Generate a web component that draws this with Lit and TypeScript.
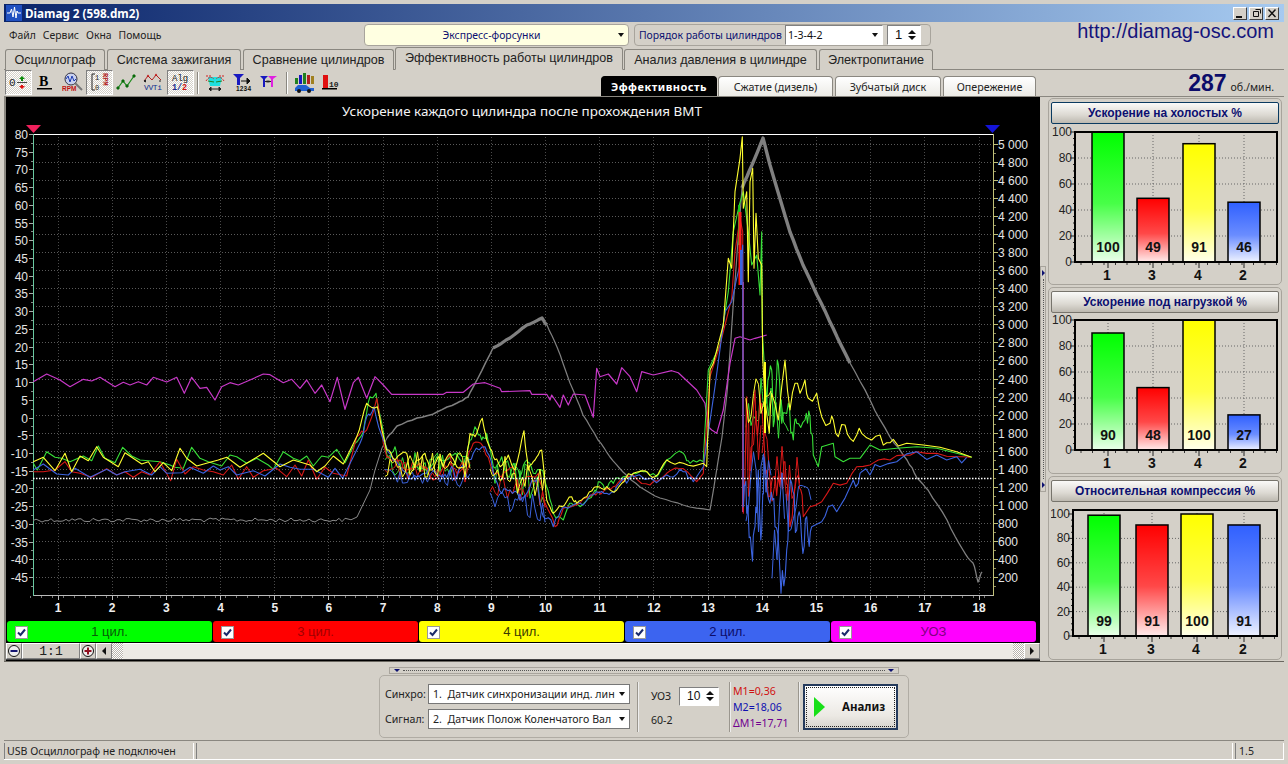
import { LitElement, html, css, svg } from "lit";
import { customElement, property } from "lit/decorators.js";

type Pt = [number, number];
const zoom = (ox: number, oy: number) => (s: string): Pt[] =>
  s.trim().split(/\s+/).map((p) => {
    const [a, b] = p.split(",").map(Number);
    return [ox + a / 3, oy + b / 3] as Pt;
  });
const Z7 = zoom(690, 125);
const Z8 = zoom(690, 360);
const Z9 = zoom(0, 370);
const Z10 = zoom(350, 300);

let seed = 12345;
const rnd = () => {
  seed = (seed * 1103515245 + 12345) & 0x7fffffff;
  return seed / 0x7fffffff;
};
const jitter = (pts: Pt[], amp: number): Pt[] => {
  const out: Pt[] = [];
  for (let i = 0; i < pts.length; i++) {
    out.push(pts[i]);
    if (i < pts.length - 1) {
      const [x0, y0] = pts[i];
      const [x1, y1] = pts[i + 1];
      out.push([(x0 + x1) / 2, (y0 + y1) / 2 + (rnd() - 0.5) * 2 * amp]);
    }
  }
  return out;
};
const jj = (pts: Pt[], amp: number) => jitter(jitter(pts, amp), amp * 0.7);
const P = (pts: Pt[]) => pts.map(([x, y]) => `${x.toFixed(1)},${y.toFixed(1)}`).join(" ");

/** A jagged trace between x0 and x1 whose samples stay inside a linearly changing y band. */
const band = (x0: number, x1: number, t0: number, b0: number, t1: number, b1: number, step = 2.5): Pt[] => {
  const out: Pt[] = [];
  for (let x = x0; x <= x1; x += step) {
    const f = (x - x0) / (x1 - x0);
    const t = t0 + (t1 - t0) * f;
    const b = b0 + (b1 - b0) * f;
    out.push([x, t + (b - t) * rnd()]);
  }
  return out;
};

const grayThin0: Pt[] = (() => {
  const out: Pt[] = [];
  for (let x = 33; x < 352; x += 3) out.push([x, 520 + (rnd() - 0.5) * 4]);
  return out;
})();
const grayA: Pt[] = [...grayThin0, [357, 517], [370, 490], [375, 470], [382, 448], [387, 438]];
const grayB: Pt[] = jj([[387, 438], [397, 426], [417, 418], [437, 412], [457, 403], [468, 397], [478, 378], [493, 348]], 1);
const grayC: Pt[] = jj([[493, 348], [510, 338], [527, 325], [542, 318], [547, 325]], 1);
const grayD: Pt[] = jj([[547, 325], [557, 347], [570, 383], [583, 415], [598, 440], [610, 457], [623, 472], [640, 487], [660, 498], [683, 505], [710, 510], [722, 437], [727, 393], [730, 352], [733, 308], [742, 188]], 0.9);
const grayE: Pt[] = jj([[742, 188], [752, 165], [763, 138], [770, 165], [790, 232], [803, 265], [817, 295], [833, 328], [850, 363]], 0.8);
const grayF: Pt[] = jj([[850, 363], [870, 400], [890, 437], [907, 460], [917, 478], [928, 490], [947, 520], [963, 550], [973, 563], [978, 582], [982, 572]], 1.5);

const magenta: Pt[] = [
  ...Z9("100,35 140,12 180,30 210,50 250,28 275,33 300,22 345,50 370,37 390,45 415,35 440,45 460,22 500,36 530,22 553,70 575,22 600,55 620,52 645,90 665,50 690,38 715,45 750,30 790,12 810,14 850,38 875,28 900,55 920,30 945,70 965,45 990,95 1012,22 1035,118 1060,38"),
  ...Z10("25,232 50,295 75,230 100,255 125,283 280,283 290,277 340,277 370,252 405,248 450,265 455,275 540,272 545,283 590,283 600,300 605,285 630,322 640,285 655,315 670,282 705,285 730,352 740,205 750,230 775,222 800,252 815,203 840,230 860,275 875,215 910,225 965,212 985,218 1040,270 1065,310 1075,380"),
  ...Z8("65,210 80,220 100,150 120,10"),
  ...Z7("135,640 150,635 180,645 195,640 230,630"),
];

const green: Pt[] = [
  ...Z9("100,280 112,300 140,245 165,262 185,265 210,275 250,258 275,272 295,228 315,265 345,278 368,232 395,258 420,270 445,272 480,275 510,285 525,292 550,295 575,232 600,265 625,275 665,288 690,255 710,260 740,280 770,265 805,285 820,298 850,245 880,265 900,272 920,258 940,288 965,258 985,262 1010,238 1035,278"),
  ...jj(Z10("15,430 40,395 60,290 78,280 95,370 115,475 135,440 150,500 175,520 200,500 225,510 260,470 290,480 315,460 340,500 360,420 375,380 395,420 410,400 430,500 455,470 475,530 490,490 510,530 530,480 550,520 575,510 590,560 610,640 640,660 665,610 690,620 735,570 745,545 765,570 790,550 820,530 850,520 880,515 920,530 950,480 1000,460 1020,490 1060,485"), 4),
  ...Z8("40,300 55,30"),
  ...Z7("90,660 115,500 130,320 148,240 160,200 175,320 185,420 200,390 210,510 215,320 217,620"),
  ...jj(Z8("230,130 245,30 250,200 262,0 275,190 295,130 310,240 320,190 345,180 360,170 370,285"), 14),
  ...Z8("385,320 395,260 430,250 435,290 460,305 480,295 510,295 540,255 570,270 620,265 680,260 740,265 800,280 845,292"),
];
const yellow: Pt[] = [
  ...Z9("100,275 130,262 165,302 195,250 215,305 240,258 265,272 290,230 310,262 355,290 375,248 425,282 445,275 465,305 490,278 515,302 540,235 560,265 590,288 625,278 655,270 680,262 720,292 790,250 840,290 880,270 930,285 950,305 975,288 1000,258 1030,282"),
  ...jj(Z10("20,410 50,310 82,320 110,450 135,480 170,460 180,525 200,480 225,460 240,510 265,470 280,500 300,460 320,500 345,500 360,400 375,410 397,355 410,420 430,470 450,500 475,465 495,510 522,392 535,510 555,480 575,450 590,600 610,640 635,620 665,590 680,610 710,590 740,560 770,560 800,570 830,530 850,520 885,512 915,530 950,480 1000,490 1060,490"), 3),
  ...Z8("50,320 60,30"),
  ...Z7("70,715 100,600 115,400 125,430 135,200 150,100 157,35 160,250 170,200 175,470 180,170 188,130 192,430 198,265 205,400 215,420 218,700"),
  ...jitter(Z8("225,120 238,220 245,100 265,180 285,0 300,150 315,70 330,100 345,60 355,115 380,100 395,170 420,190 430,180 445,230 465,195 480,235 500,225 515,220 545,240 570,225 590,248 610,238"), 8),
  ...Z8("625,258 650,250 700,255 750,262 800,275 845,292"),
];
const red: Pt[] = [
  ...Z9("100,305 130,305 165,300 195,275 215,305 240,310 275,322 320,296 350,315 375,305 400,322 425,305 450,315 480,275 512,332 530,268 555,312 580,290 610,300 640,305 670,315 695,285 715,328 740,290 760,322 790,302 830,295 860,320 885,285 905,318 925,270 950,328 975,292 1000,310 1040,318"),
  ...jj(Z10("20,410 50,390 80,295 100,430 115,470 150,480 170,510 210,490 250,540 300,465 320,520 345,490 370,430 400,440 430,520 455,530 490,500 510,570 530,530 565,520 585,610 615,680 640,625 690,610 730,580 760,575 790,560 820,545 850,525 900,555 950,520 985,505 1040,545"), 4),
  ...Z8("40,340 60,50"),
  ...Z7("90,660 125,520 135,380 150,280 158,320"),
  ...jj(Z8("160,460 170,110 178,330 195,90 205,200 215,130 230,330 250,350 270,380 285,305 300,500 325,345 340,470"), 26),
  ...jitter(Z8("360,440 395,425 430,370 470,370 500,320 540,315 565,300 600,300 640,285 680,275 740,280 800,290 840,292"), 2),
];
const blue: Pt[] = [
  ...Z9("100,300 130,282 170,312 205,315 225,295 270,322 320,298 350,315 375,305 420,298 455,315 480,290 500,310 545,308 570,292 610,310 640,288 660,300 685,290 710,315 760,302 795,318 840,282 870,292 900,298 940,298 985,322 1005,295 1028,325"),
  ...jj(Z10("30,430 50,350 72,320 100,420 130,480 170,520 200,530 240,500 280,530 300,510 320,535 345,500 370,460 405,440 430,520 455,580 480,570 510,600 540,560 560,540 580,650 610,680 640,620 700,615 740,575 770,580 800,560 830,550 850,530 920,548 960,530 1000,515 1030,545"), 5),
  ...Z8("40,320 75,80"),
  ...Z7("105,560 125,530 140,460 150,420 158,360"),
  ...jj(Z8("160,440 170,460 185,580 195,500 205,330 215,510 222,290 240,430 255,500 273,700 290,570 305,370 320,510 335,540 350,470 365,500"), 30),
  ...jitter(Z8("395,485 415,440 440,455 490,360 505,370 515,335 540,345 570,320 620,305 680,275 740,285 800,290 830,292"), 7),
];

const bands = {
  green: [band(385, 470, 452, 476, 452, 478), band(490, 545, 452, 492, 470, 506), band(746, 790, 362, 430, 400, 445)],
  yellow: [band(385, 470, 450, 478, 452, 478), band(490, 545, 448, 488, 470, 505), band(746, 772, 358, 430, 375, 415)],
  red: [band(385, 470, 456, 478, 462, 484), band(490, 545, 468, 496, 480, 512), band(746, 762, 395, 505, 420, 500), band(762, 800, 425, 500, 455, 515)],
  blue: [band(385, 470, 466, 482, 470, 490), band(490, 545, 482, 506, 495, 525), band(746, 772, 440, 540, 450, 530), band(772, 786, 470, 590, 470, 560), band(786, 812, 480, 535, 485, 520)],
};

const X0 = 58, XS = 54.18;
const xs = Array.from({ length: 18 }, (_, i) => X0 + XS * i);
const rightTicks = Array.from({ length: 25 }, (_, i) => ({ y: 144 + 18.08 * i, v: 5000 - 200 * i }));
const leftTicks = Array.from({ length: 26 }, (_, i) => ({ y: 134.5 + 17.72 * i, v: 80 - 5 * i })).filter((t) => t.v >= -45);
const fmt = (v: number) => (v >= 1000 ? `${Math.floor(v / 1000)} ${String(v % 1000).padStart(3, "0")}` : `${v}`);

@customElement("bar-panel")
class BarPanel extends LitElement {
  static styles = css`
    :host { display: block; }
    .panel { border: 1px solid #a8a49c; border-radius: 5px; padding: 3px 2px 0; box-sizing: border-box; display: flex; flex-direction: column; height: 100%; }
    .head { height: 22px; box-sizing: border-box; border: 1px solid #77746c; border-radius: 2px; background: linear-gradient(#fafaf8, #dcd9d2 60%, #bdb9b0); display: flex; align-items: center; justify-content: center; font: bold 12px "Liberation Sans", sans-serif; color: #0c1070; flex: none; }
    .head.focus { border-color: #0a3a60; }
    svg { display: block; flex: none; }
    .lab { font: 12px "Liberation Sans", sans-serif; fill: #222; }
    .cat { font: bold 14px "Liberation Sans", sans-serif; fill: #111; }
    .val { font: bold 14px "Liberation Sans", sans-serif; fill: #111; }
  `;
  @property() heading = "";
  @property({ type: Boolean }) focus = false;
  @property({ type: Array }) bars: { x: number; v: number; c: string }[] = [];
  @property({ type: Number }) top = 8;
  @property({ type: Number }) ph = 130;
  @property({ type: Number }) left = 24;
  @property({ type: Number }) scale = 1.3;
  @property({ type: Number }) h = 160;

  render() {
    const bottom = this.top + this.ph;
    const right = 226;
    const L = this.left;
    const s = this.scale;
    const ticks = [0, 20, 40, 60, 80, 100];
    const minors: number[] = [];
    for (let v = 0; v <= 100; v += 5) minors.push(v);
    const bottomMinor: number[] = [];
    for (let x = L + 6; x < right; x += 11.5) bottomMinor.push(x);
    return html`<div class="panel">
      <div class="head ${this.focus ? "focus" : ""}">${this.heading}</div>
      <svg width="230" height=${this.h} viewBox="0 0 230 ${this.h}">
        <defs>
          ${this.bars.map(
            (b, i) => svg`<linearGradient id="g${i}" x1="0" y1="0" x2="0" y2="1"><stop offset="0" stop-color=${b.c}/><stop offset="0.55" stop-color=${b.c} stop-opacity="0.72"/><stop offset="1" stop-color=${b.c} stop-opacity="0.08"/></linearGradient>`
          )}
        </defs>
        ${ticks.filter((v) => v > 0 && v < 100).map(
          (v) => svg`<line x1=${L} x2=${right} y1=${bottom - v * s} y2=${bottom - v * s} stroke="#666" stroke-dasharray="1 2"/>`
        )}
        ${this.bars.map(
          (b) => svg`<line x1=${b.x + 16} x2=${b.x + 16} y1=${this.top} y2=${bottom} stroke="#666" stroke-dasharray="1 2"/>`
        )}
        ${minors.map((v) => svg`<line x1=${L - (v % 20 === 0 ? 5 : 2)} x2=${L} y1=${bottom - v * s} y2=${bottom - v * s} stroke="#222"/>`)}
        ${bottomMinor.map((x) => svg`<line x1=${x} x2=${x} y1=${bottom} y2=${bottom + 3} stroke="#333"/>`)}
        ${this.bars.map(
          (b, i) => svg`
            <rect x=${b.x} y=${bottom - Math.min(b.v * s, this.ph)} width="32" height=${Math.min(b.v * s, this.ph)} fill="#fff"/>
            <rect x=${b.x} y=${bottom - Math.min(b.v * s, this.ph)} width="32" height=${Math.min(b.v * s, this.ph)} fill="url(#g${i})" stroke="#000" stroke-width="1.5"/>
            <text class="val" x=${b.x + 16} y=${bottom - 10} text-anchor="middle">${b.v}</text>
            <line x1=${b.x + 16} x2=${b.x + 16} y1=${bottom} y2=${bottom + 6} stroke="#222"/>
          `
        )}
        <path d="M${L} ${this.top}H${right}V${bottom}H${L}Z" fill="none" stroke="#000" stroke-width="2"/>
        ${ticks.map(
          (v) => svg`<text class="lab" x=${L - 3} y=${bottom - v * s + 4} text-anchor="end">${v}</text>`
        )}
        ${this.bars.map(
          (b, i) => svg`<text class="cat" x=${b.x + 15} y=${bottom + 18} text-anchor="middle">${["1", "3", "4", "2"][i]}</text>`
        )}
      </svg>
    </div>`;
  }
}

const G = "#00ff00", R = "#ff0000", Y = "#ffff00", B = "#3060ff";

const icons = [
  svg`<text x="1" y="14" font-size="11" font-family="Liberation Mono" fill="#222">0</text><path d="M14 4l3 3h-2v2h-2V7h-2z" fill="#0a8a0a"/><path d="M14 17l-3-3h2v-1h2v1h2z" fill="#e01010"/><line x1="9" x2="19" y1="10.5" y2="10.5" stroke="#444"/>`,
  svg`<text x="4" y="14" font-size="14" font-weight="bold" font-family="Liberation Serif" fill="#000">B</text><rect x="2" y="16" width="15" height="1.5" fill="#000"/>`,
  svg`<circle cx="9" cy="7" r="6" fill="#c8d0f0" stroke="#334"/><path d="M4 7l2-3 2 6 2-6 2 5 2-2" fill="none" stroke="#1a3ab0"/><text x="0" y="19" font-size="6.5" font-weight="bold" font-family="Liberation Sans" fill="#c01010">RPM</text><line x1="13" y1="11" x2="20" y2="18" stroke="#777" stroke-width="2"/>`,
  svg`<path d="M6 2H3V18H6" fill="none" stroke="#222"/><text x="6" y="8" font-size="7" font-family="Liberation Mono" fill="#222">1</text><text x="6" y="18" font-size="7" font-family="Liberation Mono" fill="#222">0</text><text transform="translate(14,1) rotate(90)" font-size="7" font-weight="bold" font-family="Liberation Mono" fill="#b02020">RPM</text>`,
  svg`<polyline points="2,16 7,9 11,14 18,4" fill="none" stroke="#1a8a1a" stroke-width="1.2"/><path d="M2 14l2 2-2 2-2-2zM7 7l2 2-2 2-2-2zM11 12l2 2-2 2-2-2zM18 2l2 2-2 2-2-2z" fill="#0a6a0a"/>`,
  svg`<polyline points="1,9 5,4 9,8 13,3 18,8" fill="none" stroke="#b02020"/><path d="M5 2.5l1.5 2h-3zM13 1.5l1.5 2h-3z" fill="#c01010"/><path d="M1 9l1.5-1v2zM18 9l-2 0" stroke="#222"/><text x="1" y="18" font-size="8" font-family="Liberation Mono" textLength="18" fill="#123090">VVTi</text>`,
  svg`<text x="2" y="9" font-size="9" font-family="Liberation Mono" fill="#222">Alg</text><text x="2" y="18" font-size="8.5" font-weight="bold" font-family="Liberation Mono" fill="#1a2a90">1/</text><text x="12" y="18" font-size="8.5" font-weight="bold" font-family="Liberation Mono" fill="#d01010">2</text>`,
  svg`<path d="M3 5H17L15 14H5Z" fill="#20e0e0"/><path d="M1 9Q5 3 9 7M19 9Q15 3 11 7M1 4H6M14 4H19" fill="none" stroke="#d02020" stroke-dasharray="2 1"/><path d="M3 9l6 1M17 9l-6 1" stroke="#208020"/><path d="M4 17H16M4 17l2-2v4zM16 17l-2-2v4z" stroke="#222" fill="#222"/>`,
  svg`<path d="M1 2H12L8 6V13H5V6Z" fill="#1818c0"/><path d="M9 9H18M18 9l-3-3v6z" fill="#111" stroke="#111"/><text x="4" y="19" font-size="6.5" font-weight="bold" font-family="Liberation Sans" textLength="15" fill="#111">1234</text>`,
  svg`<path d="M1 4H9L6 7V15H4V7Z" fill="#1818c0"/><path d="M9 4H18L14 7V15H12V7Z" fill="#e020e0"/><path d="M6 9.5H12" stroke="#222"/><path d="M6.5 9.5l2-1.5v3zM11.5 9.5l-2-1.5v3z" fill="#222"/>`,
  svg`<g><rect x="1" y="6" width="3" height="6" fill="#208020"/><rect x="5" y="3" width="3" height="9" fill="#1818c0"/><rect x="9" y="1" width="3" height="11" fill="#208020"/><rect x="13" y="3" width="3" height="9" fill="#b02020"/><rect x="17" y="4" width="3" height="8" fill="#a08020"/></g><path d="M1 16l3-3h8l4 3h4v3H1z" fill="#2060d0"/><circle cx="5" cy="19" r="2" fill="#111"/><circle cx="15" cy="19" r="2" fill="#111"/>`,
  svg`<rect x="2" y="3" width="5" height="13" fill="#e01010"/><rect x="1" y="16" width="15" height="1.5" fill="#000"/><text x="8" y="15" font-size="8" font-weight="bold" font-family="Liberation Mono" fill="#222">10</text>`,
];

const toggled = new Set([0, 3, 6]);
const tabs = ["Осциллограф", "Система зажигания", "Сравнение цилиндров", "Эффективность работы цилиндров", "Анализ давления в цилиндре", "Электропитание"];
const subs = ["Эффективность", "Сжатие (дизель)", "Зубчатый диск", "Опережение"];
const legend = [
  { t: "1 цил.", c: "lg" },
  { t: "3 цил.", c: "lr" },
  { t: "4 цил.", c: "ly" },
  { t: "2 цил.", c: "lb" },
  { t: "УОЗ", c: "lm" },
];

@customElement("app-root")
export class AppRoot extends LitElement {
  static styles = css`
    :host { display: block; width: 1288px; height: 764px; overflow: hidden; background: #d4d0c8; font-family: "Liberation Sans", sans-serif; color: #111; }
    .win { display: flex; flex-direction: column; height: 764px; box-sizing: border-box; padding: 4px 4px 4px; }
    .title { height: 18px; flex: none; background: linear-gradient(90deg, #0a246a, #a6caf0); display: flex; align-items: center; padding: 0 5px 0 2px; color: #fff; font: bold 11.7px "Noto Sans", sans-serif; }
    .logo { margin-right: 3px; display: block; }
    .wb { display: flex; margin-left: auto; gap: 2px; }
    .wbtn { width: 14px; height: 13px; box-sizing: border-box; background: #d4d0c8; border: 1px solid; border-color: #fff #404040 #404040 #fff; display: block; }
    .wbtn svg { display: block; }

    .top { height: 25px; flex: none; display: flex; align-items: center; position: relative; }
    .menu { width: 360px; display: flex; gap: 7px; padding-left: 5px; box-sizing: border-box; font: 10.4px "Noto Sans", sans-serif; color: #222; flex: none; }
    .combo-y { width: 265px; height: 22px; box-sizing: border-box; border: 1px solid #a8a49c; border-radius: 4px; background: #ffffe1; display: flex; align-items: center; font: 10.4px "Noto Sans", sans-serif; color: #0c1070; flex: none; }
    .combo-y span { flex: 1; text-align: center; }
    .arrow { width: 0; height: 0; border: 3.5px solid transparent; border-top: 4px solid #111; border-bottom: 0; margin-right: 4px; flex: none; }
    .order { margin-left: 5px; width: 297px; height: 22px; box-sizing: border-box; border: 1px solid #a8a49c; border-radius: 4px; display: flex; align-items: center; padding-left: 4px; font: 10.4px "Noto Sans", sans-serif; color: #0c1070; flex: none; gap: 4px; }
    .order .lbl { width: 142px; white-space: nowrap; flex: none; }
    .field { background: #fff; border: 1px solid; border-color: #808080 #fff #fff #808080; box-sizing: border-box; display: flex; align-items: center; color: #111; font: 10.6px "Noto Sans", sans-serif; padding-left: 2px; }
    .cyl { width: 98px; height: 20px; justify-content: space-between; }
    .spin1 { width: 34px; height: 20px; justify-content: space-between; font: 13px "Liberation Sans", sans-serif; padding-left: 7px; }
    .spn { display: flex; flex-direction: column; gap: 2px; margin-right: 4px; }
    .spn i { display: block; width: 0; height: 0; border: 4px solid transparent; }
    .spn i:first-child { border-bottom: 4px solid #111; border-top: 0; }
    .spn i:last-child { border-top: 4px solid #111; border-bottom: 0; }
    .url { margin-left: auto; margin-right: 10px; font: 20px "Liberation Sans", sans-serif; color: #14147c; align-self: flex-start; line-height: 21px; margin-top: -1px; }

    .tabs { height: 23px; flex: none; display: flex; align-items: flex-end; box-sizing: border-box; border-bottom: 1px solid #8a8780; padding-left: 1px; gap: 2px; }
    .tab { height: 21px; box-sizing: border-box; border: 1px solid #8a8780; border-bottom: 0; border-radius: 3px 3px 0 0; background: #d4d0c8; font: 12.6px "Liberation Sans", sans-serif; color: #222; display: flex; align-items: center; justify-content: center; white-space: nowrap; margin-bottom: -1px; flex: none; }
    .tab.t0 { width: 100px; } .tab.t1 { width: 134px; } .tab.t2 { width: 151px; } .tab.t4 { width: 193px; } .tab.t5 { width: 114px; }
    .tab.t3 { width: 228px; height: 23px; margin: 0 -1px -1px -1px; padding-bottom: 2px; border-bottom: 1px solid #d4d0c8; }

    .tool { height: 27px; flex: none; display: flex; align-items: flex-end; box-sizing: border-box; border-bottom: 1px solid #8a8780; padding-left: 1px; position: relative; }
    .icons { display: flex; width: 345px; flex: none; height: 25px; align-items: center; margin-bottom: 1px; }
    .tb { width: 27px; height: 25px; box-sizing: border-box; display: flex; align-items: center; justify-content: center; flex: none; }
    .tb.on { background: repeating-conic-gradient(#fff 0 25%, #d4d0c8 0 50%) 0 0 / 2px 2px; border: 1px solid; border-color: #808080 #fff #fff #808080; }
    .sep { width: 8px; height: 22px; flex: none; display: flex; justify-content: center; }
    .sep::before { content: ""; width: 1px; background: #8a8780; border-right: 1px solid #fff; }
    .subs { display: flex; margin-left: 251px; gap: 1px; align-items: flex-end; flex: none; }
    .sub { height: 20px; box-sizing: border-box; border: 1px solid #8a8780; border-bottom: 0; border-radius: 4px 4px 0 0; background: linear-gradient(#fff, #ecebe6); font: 10.7px "Noto Sans", sans-serif; color: #222; display: flex; align-items: center; justify-content: center; }
    .sub.s0 { width: 116px; background: #000; color: #fff; font: bold 11px "Noto Sans", sans-serif; letter-spacing: 0.5px; border-color: #000; }
    .sub.s1 { width: 115px; }
    .sub.s2 { width: 106px; margin-left: 1px; }
    .sub.s3 { width: 93px; margin-left: 1px; }
    .rpm { margin-left: auto; margin-right: 10px; display: flex; align-items: baseline; gap: 4px; align-self: center; color: #0c0c6a; }
    .rpm b { font: bold 23px "Liberation Sans", sans-serif; line-height: 24px; }
    .rpm span { font: 10.6px "Noto Sans", sans-serif; color: #222; }

    .main { flex: none; height: 564px; display: flex; }
    .left { width: 1036px; flex: none; border-left: 2px solid #8a8780; background: #000; box-sizing: border-box; display: flex; flex-direction: column; }
    .plot { display: block; flex: none; }
    .plot text { font-family: "Liberation Sans", sans-serif; }
    .plot .ttl { font-size: 13.45px; fill: #f4f4f4; font-family: "Noto Sans", sans-serif; }
    .yl { font-size: 12px; fill: #e4e4e4; }
    .xl { font-size: 12px; font-weight: bold; fill: #eee; }
    .legend { height: 25px; flex: none; display: flex; gap: 1px; padding: 3px 4px 1px 1px; box-sizing: border-box; }
    .li { flex: 1; border-radius: 3px; display: flex; align-items: center; position: relative; font: 13px "Liberation Sans", sans-serif; justify-content: center; }
    .li svg { position: absolute; left: 8px; top: 5px; }
    .lg { background: #00ff00; color: #075c07; }
    .lr { background: #ff0000; color: #a00000; }
    .ly { background: #ffff00; color: #3a3a00; }
    .lb { background: #3c64f0; color: #0c0c6a; }
    .lm { background: #ff00ff; color: #800080; }
    .scroll { height: 17px; flex: none; background: #d4d0c8; display: flex; align-items: stretch; box-sizing: border-box; border-bottom: 1px solid #444; }
    .sb { width: 16px; box-sizing: border-box; border: 1px solid; border-color: #fff #808080 #808080 #fff; display: flex; align-items: center; justify-content: center; flex: none; }
    .zoomv { width: 58px; flex: none; box-sizing: border-box; border: 1px solid; border-color: #fff #808080 #808080 #fff; font: 13px "Liberation Mono", monospace; display: flex; align-items: center; justify-content: center; color: #222; }
    .track { flex: 1; display: flex; background: #e8e6e1; }
    .thumb { width: 11px; flex: none; background: repeating-conic-gradient(#fff 0 25%, #b8b4ac 0 50%) 0 0 / 2px 2px; }
    .bar { flex: 1; border-top: 1px solid #fff; background: #eceae5; }
    .la { border-top: 4px solid transparent; border-bottom: 4px solid transparent; border-right: 4px solid #111; width: 0; height: 0; }
    .ra { border-top: 4px solid transparent; border-bottom: 4px solid transparent; border-left: 4px solid #111; width: 0; height: 0; }

    .split { width: 6px; height: 226px; flex: none; align-self: center; margin: 0 1px 0 0; box-sizing: border-box; border: 1px solid #a8a49c; display: flex; flex-direction: column; align-items: center; justify-content: space-between; padding: 3px 0; color: #0c0c6a; }
    .split i { width: 0; height: 0; border-top: 3px solid transparent; border-bottom: 3px solid transparent; border-left: 3px solid #0c1070; }
    .split b { flex: 1; width: 0; margin: 3px 0; border-left: 1px dotted #555; }
    .right { width: 234px; flex: none; margin-left: 1px; display: flex; flex-direction: column; margin-top: 1px; }
    .p1 { height: 187px; } .p2 { height: 187px; margin-top: 2px; } .p3 { height: 184px; margin-top: 2px; }

    .bottom { flex: none; height: 79px; border-top: 1px solid #6a6760; box-sizing: border-box; display: flex; flex-direction: column; align-items: center; position: relative; padding-top: 5px; }
    .hs { width: 510px; height: 7px; box-sizing: border-box; border: 1px solid #a8a49c; display: flex; align-items: center; justify-content: space-between; padding: 0 4px; flex: none; }
    .hs i { width: 0; height: 0; border-left: 3px solid transparent; border-right: 3px solid transparent; border-top: 3px solid #0c1070; flex: none; }
    .hs b { flex: 1; margin: 0 3px; border-top: 1px dotted #555; }
    .ctrl { width: 530px; height: 63px; flex: none; box-sizing: border-box; border: 1px solid #b0aca4; border-radius: 5px; display: flex; align-items: center; padding-left: 5px; margin-top: 1px; font: 10.6px "Noto Sans", sans-serif; color: #222; }
    .c1 { width: 252px; flex: none; display: grid; grid-template-columns: 43px 202px; row-gap: 5px; align-items: center; }
    .dd { height: 20px; border: 1px solid #777; background: #fff; display: flex; align-items: center; justify-content: space-between; padding-left: 4px; box-sizing: border-box; font: 10.6px "Noto Sans", sans-serif; white-space: nowrap; overflow: hidden; color: #222; }
    .vs { width: 1px; height: 50px; background: #9a968e; border-right: 1px solid #eee; flex: none; }
    .c2 { width: 90px; flex: none; box-sizing: border-box; padding-left: 12px; display: grid; grid-template-columns: 28px 40px; row-gap: 7px; align-items: center; }
    .spin2 { width: 40px; height: 19px; justify-content: space-between; padding-left: 7px; font: 12px "Liberation Sans", sans-serif; }
    .c2 .w { grid-column: 1 / 3; font: 10.6px "Noto Sans", sans-serif; }
    .c3 { width: 67px; flex: none; box-sizing: border-box; padding-left: 2px; display: flex; flex-direction: column; gap: 2px; font: 10.6px/14px "Noto Sans", sans-serif; }
    .m1 { color: #d01010; } .m2 { color: #1010b0; } .m3 { color: #700090; }
    .go { margin-left: 3px; width: 95px; height: 46px; flex: none; box-sizing: border-box; border: 2px solid #243a5c; background: linear-gradient(#fff, #ece9e4 70%, #d8d5cf); outline: 1px dotted #222; outline-offset: -4px; display: flex; align-items: center; padding-left: 9px; font: bold 11.5px "Noto Sans", sans-serif; color: #111; gap: 17px; }
    .tri { width: 0; height: 0; border-top: 10px solid transparent; border-bottom: 10px solid transparent; border-left: 11px solid #18e018; }

    .status { height: 20px; flex: none; border-top: 1px solid #8a8780; border-bottom: 1px solid #fff; display: flex; gap: 2px; padding-top: 2px; font: 10.6px "Noto Sans", sans-serif; color: #222; box-sizing: border-box; }
    .st { height: 16px; box-sizing: border-box; border-left: 1px solid #808080; border-right: 1px solid #fff; display: flex; align-items: center; padding-left: 3px; flex: none; }
    .st.a { width: 190px; padding-left: 2px; } .st.b { flex: 1; } .st.c { width: 49px; }
  `;

  private gridPlot() {
    const minorX: number[] = [];
    for (let x = 58 - XS / 2; x < 993; x += XS / 5) minorX.push(x);
    return svg`
      ${rightTicks.map((t) => svg`<line x1="33" x2="993" y1=${t.y} y2=${t.y} stroke="#5a5a5a" stroke-dasharray="1 2" shape-rendering="crispEdges"/>`)}
      ${xs.map((x) => svg`<line x1=${x} x2=${x} y1="134" y2="595" stroke="#4a4a4a" stroke-dasharray="1 2" shape-rendering="crispEdges"/>`)}
      <line x1="33" x2="993" y1="134.5" y2="134.5" stroke="#fff" shape-rendering="crispEdges"/>
      <line x1="33" x2="993" y1="595.5" y2="595.5" stroke="#bbb" shape-rendering="crispEdges"/>
      <line x1="33.5" x2="33.5" y1="134" y2="596" stroke="#68c8a0" shape-rendering="crispEdges"/>
      <line x1="993.5" x2="993.5" y1="134" y2="596" stroke="#c0c078" shape-rendering="crispEdges"/>
      ${leftTicks.map((t) => svg`<line x1="29" x2="33" y1=${t.y} y2=${t.y} stroke="#aaa" shape-rendering="crispEdges"/><line x1="31" x2="33" y1=${t.y + 8.86} y2=${t.y + 8.86} stroke="#888" shape-rendering="crispEdges"/><text class="yl" x="28" y=${t.y + 4.5} text-anchor="end">${t.v}</text>`)}
      ${rightTicks.map((t) => svg`<line x1="994" x2="998" y1=${t.y} y2=${t.y} stroke="#c0c078" shape-rendering="crispEdges"/><line x1="994" x2="996" y1=${t.y + 9} y2=${t.y + 9} stroke="#908f60" shape-rendering="crispEdges"/><text class="yl" x="998" y=${t.y + 4.5}>${fmt(t.v)}</text>`)}
      ${minorX.map((x) => svg`<line x1=${x} x2=${x} y1="596" y2="598" stroke="#777" shape-rendering="crispEdges"/>`)}
      ${xs.map((x, i) => svg`<line x1=${x} x2=${x} y1="596" y2="600" stroke="#bbb" shape-rendering="crispEdges"/><text class="xl" x=${x} y="612" text-anchor="middle">${i + 1}</text>`)}
    `;
  }

  private traces() {
    const line = (pts: Pt[], c: string, w = 1) =>
      svg`<polyline points=${P(pts)} fill="none" stroke=${c} stroke-width=${w} stroke-linejoin="round"/>`;
    return svg`
      ${line(grayA, "#8a8a8a", 1)}
      ${line(grayB, "#808080", 1.5)}
      ${line(grayC, "#808080", 3.2)}
      ${line(grayD, "#808080", 1.2)}
      ${line(grayE, "#808080", 3.4)}
      ${line(grayF, "#808080", 1.3)}
      ${line(magenta, "#c838c8", 1.2)}
      <line x1="743" x2="743" y1="282" y2="512" stroke="#b03aa0" stroke-width="2"/>
      ${line(green, "#38e038", 1.1)}
      ${bands.green.map((b) => line(b, "#38e038", 1))}
      ${line(red, "#d81818", 1.1)}
      ${bands.red.map((b) => line(b, "#d81818", 1))}
      ${line(blue, "#3c64e0", 1.1)}
      ${bands.blue.map((b) => line(b, "#3c64e0", 1))}
      ${line(yellow, "#ffff30", 1.1)}
      ${bands.yellow.map((b) => line(b, "#ffff30", 1))}
      <line x1="739" x2="739" y1="205" y2="245" stroke="#18c818" stroke-width="2"/>
      <line x1="740" x2="740" y1="212" y2="245" stroke="#ff2020" stroke-width="3"/>
      <line x1="740" x2="740" y1="245" y2="285" stroke="#ff1010" stroke-width="3"/>
      <line x1="741" x2="741" y1="250" y2="285" stroke="#3c64e0" stroke-width="2"/>
      <line x1="765" x2="765" y1="362" y2="433" stroke="#ffff20" stroke-width="2"/>
      <line x1="33" x2="993" y1="478.5" y2="478.5" stroke="#fff" stroke-width="1.6" stroke-dasharray="1.5 1.5"/>
    `;
  }

  render() {
    return html`<div class="win">
      <div class="title">
        <svg class="logo" width="16" height="16" viewBox="0 0 16 16"><rect width="16" height="16" fill="#2050c0"/><path d="M1 8H4L5.5 4 7 12 8.5 2 10 13 11 6 12 8H15" fill="none" stroke="#fff"/></svg>
        Diamag 2 (598.dm2)
        <div class="wb">
          <span class="wbtn"><svg width="12" height="11"><rect x="2" y="8" width="6" height="2" fill="#111"/></svg></span>
          <span class="wbtn"><svg width="12" height="11"><path d="M3.5 3.5h5v5h-5zM5.5 1.5h5v4" fill="none" stroke="#111"/></svg></span>
          <span class="wbtn"><svg width="12" height="11"><path d="M2.5 1.5l7 7.5M9.5 1.5l-7 7.5" stroke="#111" stroke-width="1.4"/></svg></span>
        </div>
      </div>

      <div class="top">
        <div class="menu"><span>Файл</span><span>Сервис</span><span>Окна</span><span>Помощь</span></div>
        <div class="combo-y"><span>Экспресс-форсунки</span><i class="arrow"></i></div>
        <div class="order">
          <span class="lbl">Порядок работы цилиндров</span>
          <div class="field cyl">1-3-4-2<i class="arrow"></i></div>
          <div class="field spin1">1<div class="spn"><i></i><i></i></div></div>
        </div>
        <div class="url">http://diamag-osc.com</div>
      </div>

      <div class="tabs">
        ${tabs.map((t, i) => html`<div class="tab t${i}">${t}</div>`)}
      </div>

      <div class="tool">
        <div class="icons">
          ${icons.map((ic, i) => html`${i === 7 || i === 10 ? html`<div class="sep"></div>` : ""}<div class="tb ${toggled.has(i) ? "on" : ""}"><svg width="21" height="21" viewBox="0 0 21 21">${ic}</svg></div>`)}
        </div>
        <div class="subs">
          ${subs.map((s, i) => html`<div class="sub s${i}">${s}</div>`)}
        </div>
        <div class="rpm"><b>287</b><span>об./мин.</span></div>
      </div>

      <div class="main">
        <div class="left">
          <svg class="plot" width="1034" height="521" viewBox="6 97 1034 521">
            <text class="ttl" x="522" y="116" text-anchor="middle">Ускорение каждого цилиндра после прохождения ВМТ</text>
            ${this.gridPlot()}
            ${this.traces()}
            <path d="M26 125H41L33.5 133Z" fill="#f0205c"/>
            <path d="M985 125H1000L992.5 133Z" fill="#1414d8"/>
          </svg>
          <div class="legend">
            ${legend.map((l) => html`<div class="li ${l.c}">
              <svg width="13" height="13" viewBox="0 0 13 13"><rect x=".5" y=".5" width="12" height="12" fill="#fff" stroke="#999"/><path d="M3 6.5L5.5 9L10 3.5" fill="none" stroke="#1a2a6a" stroke-width="2"/></svg>
              ${l.t}</div>`)}
          </div>
          <div class="scroll">
            <div class="sb"><svg width="14" height="14" viewBox="0 0 14 14"><circle cx="7" cy="7" r="5.5" fill="#eee" stroke="#111"/><rect x="3.5" y="6" width="7" height="2" fill="#141470"/></svg></div>
            <div class="zoomv">1:1</div>
            <div class="sb"><svg width="14" height="14" viewBox="0 0 14 14"><circle cx="7" cy="7" r="5.5" fill="#eee" stroke="#111"/><path d="M3.5 7H10.5M7 3.5V10.5" stroke="#901020" stroke-width="2"/></svg></div>
            <div class="sb"><i class="la"></i></div>
            <div class="track"><div class="thumb"></div><div class="bar"></div><div class="thumb"></div></div>
            <div class="sb"><i class="ra"></i></div>
          </div>
        </div>
        <div class="split"><i></i><b></b><i></i></div>
        <div class="right">
          <bar-panel class="p1" heading="Ускорение на холостых %" focus top="8" ph="130" left="24" scale="1.3" h="158"
            .bars=${[{ x: 41, v: 100, c: G }, { x: 86, v: 49, c: R }, { x: 132, v: 91, c: Y }, { x: 177, v: 46, c: B }]}></bar-panel>
          <bar-panel class="p2" heading="Ускорение под нагрузкой %" top="7" ph="130" left="24" scale="1.3" h="158"
            .bars=${[{ x: 41, v: 90, c: G }, { x: 86, v: 48, c: R }, { x: 132, v: 100, c: Y }, { x: 177, v: 27, c: B }]}></bar-panel>
          <bar-panel class="p3" heading="Относительная компрессия %" top="8" ph="126" left="22" scale="1.22" h="155"
            .bars=${[{ x: 37, v: 99, c: G }, { x: 85, v: 91, c: R }, { x: 130, v: 100, c: Y }, { x: 177, v: 91, c: B }]}></bar-panel>
        </div>
      </div>

      <div class="bottom">
        <div class="hs"><i></i><b></b><i></i></div>
        <div class="ctrl">
          <div class="c1">
            <span>Синхро:</span><div class="dd"><span>1.&nbsp; Датчик синхронизации инд. лин</span><i class="arrow"></i></div>
            <span>Сигнал:</span><div class="dd"><span>2.&nbsp; Датчик Полож Коленчатого Вал</span><i class="arrow"></i></div>
          </div>
          <div class="vs"></div>
          <div class="c2">
            <span>УОЗ</span><div class="field spin2">10<div class="spn"><i></i><i></i></div></div>
            <span class="w">60-2</span>
          </div>
          <div class="vs"></div>
          <div class="c3"><span class="m1">M1=0,36</span><span class="m2">M2=18,06</span><span class="m3">ΔM1=17,71</span></div>
          <div class="vs"></div>
          <div class="go"><i class="tri"></i>Анализ</div>
        </div>
      </div>

      <div class="status">
        <div class="st a">USB Осциллограф не подключен</div>
        <div class="st b"></div>
        <div class="st c">1.5</div>
      </div>
    </div>`;
  }
}
